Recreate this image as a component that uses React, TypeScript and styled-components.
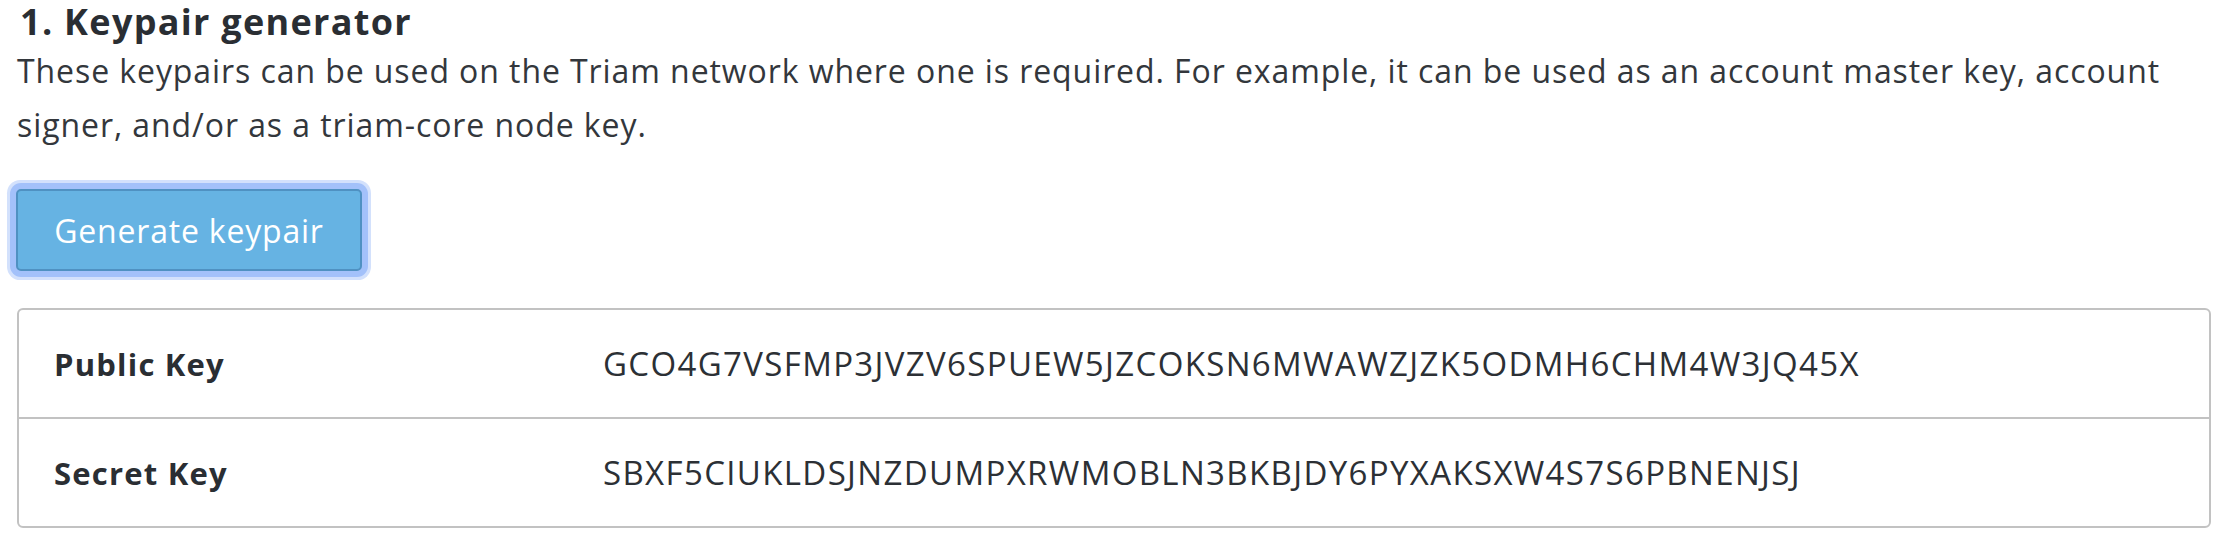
import React from "react";
import styled, { createGlobalStyle } from "styled-components";

const Global = createGlobalStyle`
  html, body { margin: 0; padding: 0; background: #ffffff; }
  body { font-family: "Open Sans", Roboto, sans-serif; color: #2c3035; }
`;

const Page = styled.main`
  padding: 0 19px 0 17px;
  display: flex;
  flex-direction: column;
`;

const Title = styled.h1`
  margin: 0;
  padding-left: 3px;
  font-size: 36px;
  font-weight: 700;
  line-height: 44px;
  letter-spacing: 1.3px;
  color: #2a2e33;
`;

const Intro = styled.p`
  margin: 0;
  font-size: 32px;
  line-height: 54px;
  font-weight: 400;
  letter-spacing: 0.92px;
  color: #33373c;
`;

const ButtonRow = styled.div`
  display: flex;
  margin-top: 37px;
`;

const GenerateButton = styled.button`
  margin-left: -1px;
  width: 346px;
  height: 82px;
  box-sizing: border-box;
  background: #66b3e3;
  border: 2px solid #4f91c2;
  border-radius: 5px;
  color: #ffffff;
  font-family: "Open Sans", sans-serif;
  font-size: 32px;
  font-weight: 400;
  letter-spacing: 0.8px;
  cursor: pointer;
  box-shadow: 0 0 0 6px #a3c1fa, 0 0 0 9px #d3e1fc;
`;

const KeyTable = styled.section`
  margin-top: 37px;
  border: 2px solid #c2c2c2;
  border-radius: 6px;
  display: flex;
  flex-direction: column;
`;

const KeyRow = styled.div<{ $last?: boolean }>`
  display: grid;
  grid-template-columns: 549px 1fr;
  align-items: center;
  height: 107px;
  padding: 0 35px;
  border-bottom: ${(p) => (p.$last ? "none" : "2px solid #c2c2c2")};
`;

const KeyLabel = styled.div`
  font-size: 31px;
  font-weight: 700;
  letter-spacing: 1.2px;
  color: #2a2e33;
`;

const KeyValue = styled.div`
  font-size: 33px;
  font-weight: 400;
  letter-spacing: 1.35px;
  color: #2c3035;
`;

export default function App() {
  return (
    <>
      <Global />
      <Page>
        <Title>1. Keypair generator</Title>
        <Intro>
          These keypairs can be used on the Triam network where one is required. For example, it can be used as an account master key, account signer, and/or as a triam-core node key.
        </Intro>
        <ButtonRow>
          <GenerateButton>Generate keypair</GenerateButton>
        </ButtonRow>
        <KeyTable>
          <KeyRow>
            <KeyLabel>Public Key</KeyLabel>
            <KeyValue>GCO4G7VSFMP3JVZV6SPUEW5JZCOKSN6MWAWZJZK5ODMH6CHM4W3JQ45X</KeyValue>
          </KeyRow>
          <KeyRow $last>
            <KeyLabel>Secret Key</KeyLabel>
            <KeyValue>SBXF5CIUKLDSJNZDUMPXRWMOBLN3BKBJDY6PYXAKSXW4S7S6PBNENJSJ</KeyValue>
          </KeyRow>
        </KeyTable>
      </Page>
    </>
  );
}
